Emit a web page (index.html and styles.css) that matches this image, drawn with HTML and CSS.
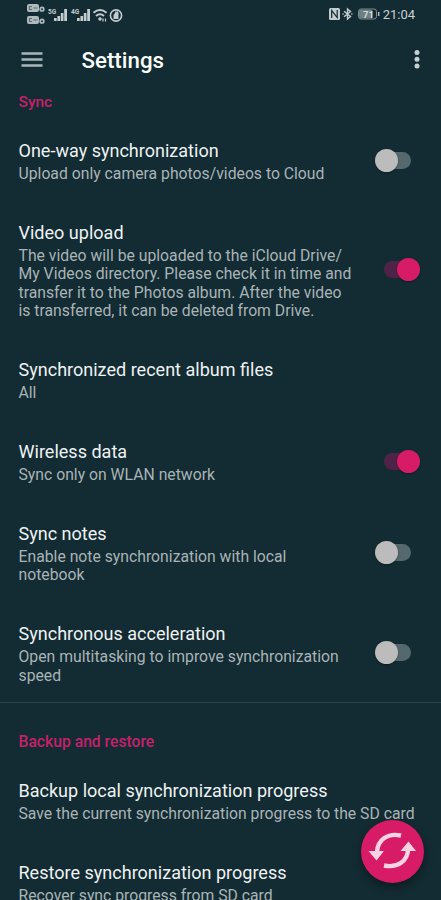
FILE: index.html
```html
<!DOCTYPE html>
<html lang="en">
<head>
    <meta charset="UTF-8">
    <meta name="viewport" content="width=device-width, initial-scale=1.0">
    <title>Settings</title>
    <link rel="stylesheet" href="styles.css">
</head>
<body>
    <!-- Status bar -->
    <div class="status-bar">
        <svg class="status-left" width="98" height="24" viewBox="0 0 98 24" aria-hidden="true">
            <g fill="#aebabd">
                <rect x="0" y="1" width="12" height="8" rx="2"/>
                <rect x="0" y="13" width="12" height="8" rx="2"/>
            </g>
            <g fill="none" stroke="#5c6d72" stroke-width="1.2">
                <path d="M5 3.5H2.5v3H5M6.5 5h4M5 15.5H2.5v3H5M6.5 17h4"/>
            </g>
            <g fill="none" stroke="#aebabd" stroke-width="1.7">
                <circle cx="15" cy="6.2" r="1.8"/>
                <circle cx="15" cy="18.2" r="1.8"/>
            </g>
            <g fill="#c3cccf">
                <text class="net-label" x="21" y="10.5">5G</text>
                <text class="net-label" x="44" y="10.5">4G</text>
                <path d="M27 18v-3h2.7v3zM30.4 18v-5h2.7v5zM33.8 18v-8h2.7v8zM37.2 18V6H40v12z"/>
                <path d="M50 18v-3h2.7v3zM53.4 18v-5h2.7v5zM56.8 18v-8h2.7v8zM60.2 18V6H63v12z"/>
                <circle cx="73" cy="16" r="1.8"/>
                <path d="M76 18.5v-3M78.5 18.5v-3" fill="none" stroke="#c3cccf" stroke-width="1.2"/>
            </g>
            <path d="M66.5 9.7q6.5-5.5 13 0M69 13q4-3.5 8 0" fill="none" stroke="#c3cccf" stroke-width="2"/>
            <circle cx="89" cy="12.5" r="5.6" fill="none" stroke="#c3cccf" stroke-width="1.6"/>
            <path d="M86.5 16v-4l1-2v2l1-4 1 1 1-1 1 2v6z" fill="#c3cccf"/>
        </svg>
        <div class="status-right">
            <svg width="54" height="16" viewBox="0 0 54 16" aria-hidden="true">
                <rect x="1" y="2" width="11" height="12" rx="1.5" fill="#c3cccf"/>
                <path d="M3.7 12V4.5l5.500 7V4" fill="none" stroke="#132b32" stroke-width="1.2"/>
                <path d="M16 5.2l6.5 5.3-3 2.5V3l3 2.5L16 10.8" fill="none" stroke="#c3cccf" stroke-width="1.4"/>
                <path d="M15 8h.1M23.8 8h.1" stroke="#c3cccf" stroke-width="1.5" stroke-linecap="round"/>
                <rect x="30.5" y="3" width="18" height="10" rx="2.5" fill="none" stroke="#7d8c90"/>
                <rect x="31" y="3.5" width="13.5" height="9" rx="2" fill="#6e7f83"/>
                <path d="M50.7 6v4" stroke="#aebabd" stroke-width="1.5"/>
                <text class="battery-label" x="35" y="11.5">71</text>
            </svg>
            <span class="clock">21:04</span>
        </div>
    </div>

    <!-- App bar -->
    <header class="app-bar">
        <svg class="menu-icon" width="22" height="16" viewBox="0 0 22 16" aria-label="Menu">
            <path d="M.5 1.5h21M.5 7.5h21M.5 13.5h21" stroke="#a9b6ba" stroke-width="2.3"/>
        </svg>
        <h1 class="app-title">Settings</h1>
        <svg class="more-icon" width="6" height="20" viewBox="0 0 6 20" aria-label="More options">
            <g fill="#c6d0d3">
                <circle cx="3" cy="2.5" r="2.5"/>
                <circle cx="3" cy="9.2" r="2.5"/>
                <circle cx="3" cy="16" r="2.5"/>
            </g>
        </svg>
    </header>

    <main>
        <section class="group">
            <h2 class="group-title group-title-first">Sync</h2>
            <div class="item">
                <div class="item-text">
                    <div class="item-title">One-way synchronization</div>
                    <div class="item-summary">Upload only camera photos/videos to Cloud</div>
                </div>
                <div class="switch"></div>
            </div>
            <div class="item">
                <div class="item-text">
                    <div class="item-title">Video upload</div>
                    <div class="item-summary">The video will be uploaded to the iCloud Drive/<br>My Videos directory. Please check it in time and<br>transfer it to the Photos album. After the video<br>is transferred, it can be deleted from Drive.</div>
                </div>
                <div class="switch switch-on"></div>
            </div>
            <div class="item">
                <div class="item-text">
                    <div class="item-title">Synchronized recent album files</div>
                    <div class="item-summary">All</div>
                </div>
            </div>
            <div class="item">
                <div class="item-text">
                    <div class="item-title">Wireless data</div>
                    <div class="item-summary">Sync only on WLAN network</div>
                </div>
                <div class="switch switch-on"></div>
            </div>
            <div class="item">
                <div class="item-text">
                    <div class="item-title">Sync notes</div>
                    <div class="item-summary">Enable note synchronization with local<br>notebook</div>
                </div>
                <div class="switch"></div>
            </div>
            <div class="item">
                <div class="item-text">
                    <div class="item-title">Synchronous acceleration</div>
                    <div class="item-summary">Open multitasking to improve synchronization<br>speed</div>
                </div>
                <div class="switch"></div>
            </div>
        </section>

        <section class="group group-divided">
            <h2 class="group-title">Backup and restore</h2>
            <div class="item">
                <div class="item-text">
                    <div class="item-title">Backup local synchronization progress</div>
                    <div class="item-summary">Save the current synchronization progress to the SD card</div>
                </div>
            </div>
            <div class="item">
                <div class="item-text">
                    <div class="item-title">Restore synchronization progress</div>
                    <div class="item-summary">Recover sync progress from SD card</div>
                </div>
            </div>
        </section>
    </main>

    <!-- Floating sync button -->
    <button class="fab" aria-label="Sync now">
        <svg width="63" height="63" viewBox="0 0 63 63">
            <g fill="none" stroke="#fbd3e2" stroke-width="4.4">
                <path d="M40 15.500C26 12.500 16.500 20.500 16 32"/>
                <path d="M23 45.500C37 48.500 46.500 40.500 47 30"/>
            </g>
            <path d="M7.500 31h15.500L15.500 40.500zM39.500 31h15.500L47.500 21.500z" fill="#fbd3e2"/>
        </svg>
    </button>
</body>
</html>
```
FILE: styles.css
```css
* {
    box-sizing: border-box;
}
body {
    margin: 0;
    height: 900px;
    overflow: hidden;
    background-color: #132b32;
    color: #eef2f3;
    font-family: Roboto, sans-serif;
}
h1, h2 {
    margin: 0;
}

/* Status bar */
.status-bar {
    display: flex;
    justify-content: space-between;
    align-items: center;
    height: 28px;
    padding: 0 26px 0 27px;
}
.status-left {
    margin-top: 1px;
}
.net-label {
    font-size: 6.5px;
    font-weight: 700;
}
.battery-label {
    font-size: 9.5px;
    font-weight: 700;
    fill: #d3dadc;
}
.status-right {
    display: flex;
    align-items: center;
    gap: 1px;
}
.clock {
    color: #c9d1d4;
    font-size: 13px;
}

/* App bar */
.app-bar {
    display: flex;
    align-items: center;
    height: 63px;
    padding: 0 21px;
}
.app-title {
    flex: 1;
    margin-left: 38.5px;
    color: #fafcfc;
    font-size: 22.3px;
    font-weight: 500;
}

/* Preference groups */
.group-title {
    height: 56px;
    padding: 27px 18.5px 0;
    color: #c5216a;
    font-size: 15.7px;
    font-weight: 500;
    line-height: 24px;
}
.group-title-first {
    height: 28px;
    padding-top: 0;
    line-height: 22px;
    font-size: 15.5px;
}
.group-divided {
    border-top: 1px solid #2b4248;
}
.item {
    display: flex;
    justify-content: space-between;
    align-items: center;
    padding: 18.1px 18px 17.2px 18.5px;
}
.item-text {
    white-space: nowrap;
}
.item-title {
    font-size: 18.05px;
    line-height: 27px;
}
.item-summary {
    margin-top: 1px;
    color: #a9b4b7;
    font-size: 15.75px;
    line-height: 18.5px;
}

/* Switches */
.switch {
    display: flex;
    flex: none;
    align-items: center;
    width: 36px;
    height: 17px;
    margin-right: 12px;
    border-radius: 9px;
    background: linear-gradient(#54686d, #54686d) right / 30px 17px no-repeat;
}
.switch::before {
    content: "";
    width: 23px;
    height: 23px;
    border-radius: 50%;
    background-color: #bcbcbc;
    box-shadow: 0 1px 2px rgba(0, 0, 0, 0.3);
}
.switch-on {
    justify-content: flex-end;
    margin-right: 3px;
    background: linear-gradient(#4f2347, #4f2347) left / 30px 17px no-repeat;
}
.switch-on::before {
    background-color: #d81b66;
}

/* Floating button */
.fab {
    position: absolute;
    left: 361px;
    top: 820px;
    width: 63px;
    height: 63px;
    padding: 0;
    border: none;
    border-radius: 50%;
    background-color: #d81b66;
    box-shadow: 0 4px 8px rgba(0, 0, 0, 0.35);
}
.fab svg {
    display: block;
}
```
